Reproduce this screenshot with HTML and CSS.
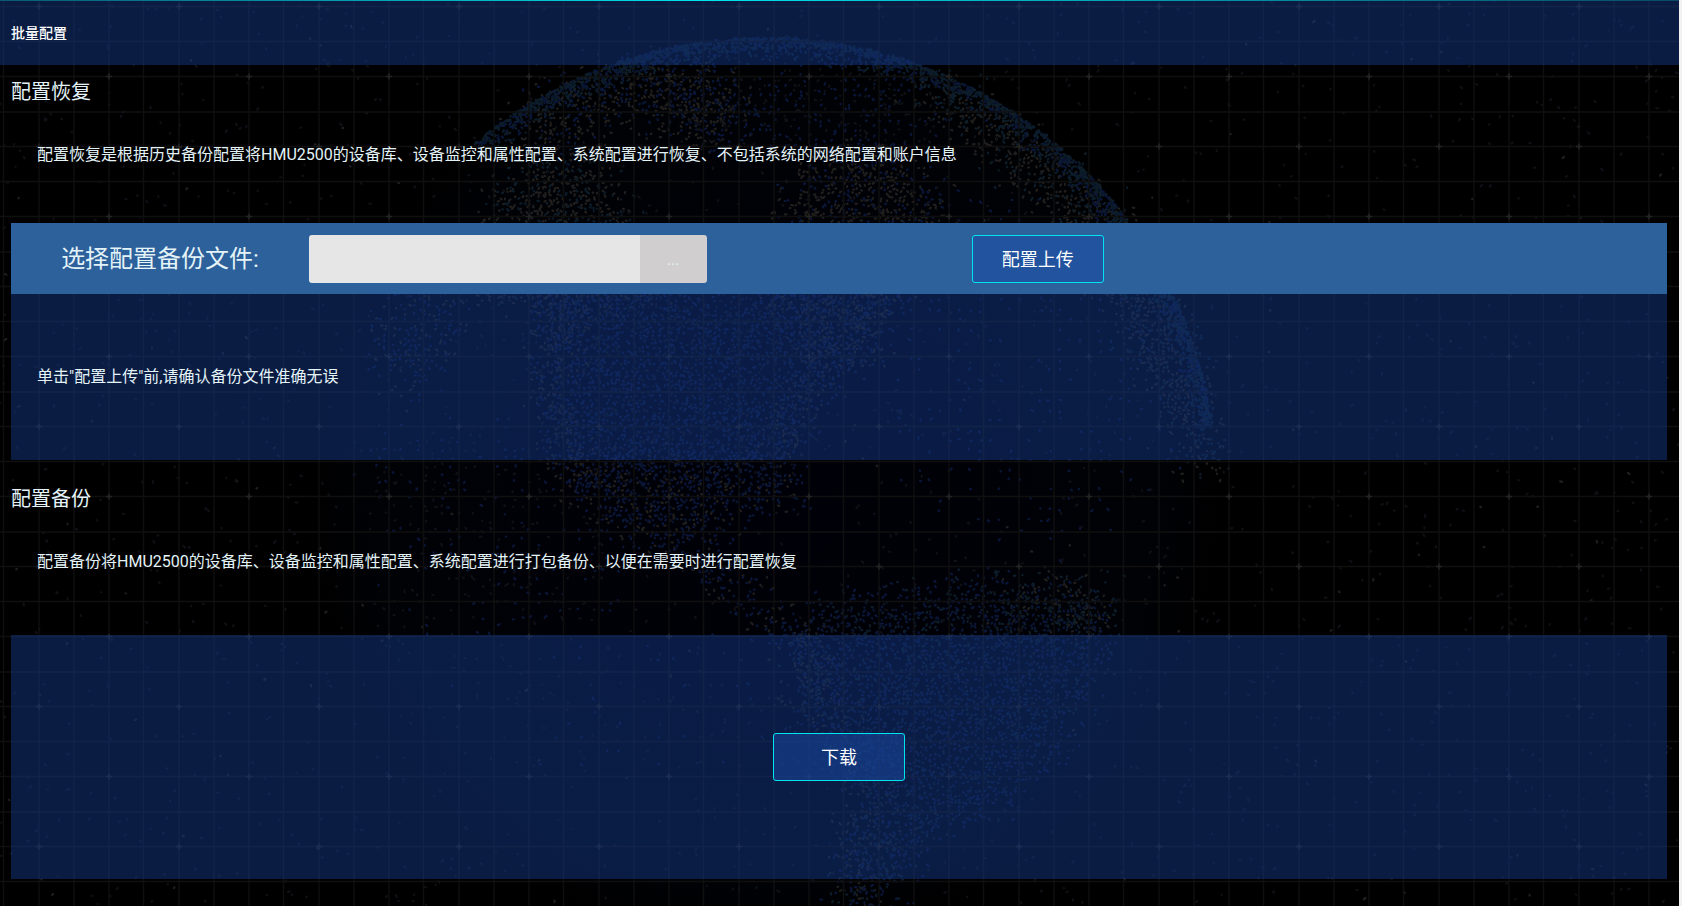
FILE: index.html
```html
<!DOCTYPE html>
<html lang="zh-CN">
<head>
<meta charset="utf-8">
<title>批量配置</title>
<link rel="stylesheet" href="styles.css">
</head>
<body>
<div class="page">
  <svg class="backdrop" viewBox="0 0 1679 906" preserveAspectRatio="xMinYMin slice" aria-hidden="true">
    <defs>
      <pattern id="grid" width="140" height="140" patternUnits="userSpaceOnUse">
        <path d="M3.500 0V140M39 0V140M74 0V140M109 0V140M0 6.500H140M0 41.500H140M0 76.500H140M0 112H140" stroke="#0f0f0f" stroke-width="1.300"/>
        <path d="M36 6.500H42M39 3.500V9.500M106 76.500H112M109 73.500V79.500" stroke="#242424" stroke-width="1.500"/>
      </pattern>
      <radialGradient id="glow">
        <stop offset="0" stop-color="#000008"/>
        <stop offset=".85" stop-color="#010206"/>
        <stop offset="1" stop-color="#000"/>
      </radialGradient>
    </defs>
    <circle cx="765" cy="490" r="458" fill="url(#glow)"/>
    <g id="globe" fill="none" stroke-linecap="round"></g>
    <rect width="1679" height="906" fill="url(#grid)"/>
  </svg>

  <header class="topbar"><h1 class="topbar-title">批量配置</h1></header>

  <main class="content">
    <section class="restore">
      <h2 class="title">配置恢复</h2>
      <p class="desc">配置恢复是根据历史备份配置将HMU2500的设备库、设备监控和属性配置、系统配置进行恢复、不包括系统的网络配置和账户信息</p>
      <form class="panel" onsubmit="return false">
        <div class="upload-bar">
          <label class="upload-label" for="file">选择配置备份文件:</label>
          <div class="picker">
            <input class="picker-input" id="file" type="text">
            <button class="picker-browse" type="button">...</button>
          </div>
          <button class="btn" type="submit">配置上传</button>
        </div>
        <p class="note">单击"配置上传"前,请确认备份文件准确无误</p>
      </form>
    </section>

    <section class="backup">
      <h2 class="title">配置备份</h2>
      <p class="desc">配置备份将HMU2500的设备库、设备监控和属性配置、系统配置进行打包备份、以便在需要时进行配置恢复</p>
      <div class="panel download">
        <button class="btn" type="button">下载</button>
      </div>
    </section>
  </main>
</div>
<script src="globe.js"></script>
</body>
</html>
```
FILE: styles.css
```css
* {
  box-sizing: border-box;
}

body {
  margin: 0;
  background: #f2f2f2;
  color: #e4f3f8;
  font-family: Roboto, "Noto Sans CJK SC", sans-serif;
  font-size: 16px;
}

h1, h2, p {
  margin: 0;
  font-weight: 400;
}

.page {
  position: relative;
  min-height: 100vh;
  margin-right: 3px;
  padding-bottom: 24px;
  background: #000;
  overflow: hidden;
}

/* starfield, globe and grid behind all content */
.backdrop {
  position: absolute;
  inset: 0;
  width: 100%;
  height: 100%;
}

.topbar {
  position: relative;
  padding: 2px 11px 0;
  background: rgba(20, 56, 132, 0.5);
}

.topbar::before {
  content: "";
  position: absolute;
  inset: 0 0 auto;
  height: 1px;
  background: linear-gradient(90deg, #0a5a74, #00e4ee 42%, #0a4a66);
}

.topbar-title {
  color: #fff;
  font-size: 14px;
  font-weight: 500;
  line-height: 63px;
}

.content {
  position: relative;
  padding: 0 12px 0 11px;
}

.title {
  font-size: 20px;
  line-height: 54px;
}

.desc {
  padding: 0 26px;
  line-height: 72px;
}

.restore .desc {
  margin-bottom: 32px;
}

.backup {
  padding-top: 12px;
}

.backup .desc {
  margin-bottom: 37px;
}

.panel {
  background: rgba(20, 56, 132, 0.5);
}

.upload-bar {
  display: grid;
  grid-template-columns: 18% 24% 40%;
  align-items: center;
  justify-items: center;
  padding: 12px 0 11px;
  background: #2c619b;
}

.upload-label {
  font-size: 24px;
  line-height: 48px;
}

.picker {
  display: flex;
  width: 100%;
  height: 48px;
  border-radius: 3px;
  overflow: hidden;
}

.picker-input {
  flex: 1;
  min-width: 0;
  padding: 0 12px;
  border: 0;
  background: #e6e6e6;
  color: #333;
  font: inherit;
}

.picker-browse {
  width: 67px;
  padding: 0;
  border: 0;
  background: #d0cece;
  color: #e4f3f8;
  font: inherit;
}

.btn {
  width: 132px;
  height: 48px;
  padding: 0 0 2px;
  border: 1px solid #00e4f0;
  border-radius: 3px;
  background: rgba(26, 72, 160, 0.55);
  color: #fff;
  font: inherit;
  font-size: 18px;
}

.note {
  padding: 0 26px;
  line-height: 166px;
}

.download {
  display: flex;
  justify-content: center;
  padding: 98px 0;
}
```
FILE: globe.js
```js
// Scatters the dots that form the continents, the rim and the stars.
(function () {
  var seed = 7;
  function rnd() {
    seed = (seed * 16807) % 2147483647;
    return seed / 2147483647;
  }
  var warm = "#201f1e", blue = "#0a1638", teal = "#0c1c28", dim = "#0e1016";
  var paths = {};
  function dot(x, y, color) {
    var len = 2 + rnd() * 2;
    (paths[color] = paths[color] || []).push(
      "M" + x.toFixed(1) + " " + y.toFixed(1) + "l" + ((rnd() - 0.5) * len).toFixed(1) + " " + ((rnd() - 0.5) * len).toFixed(1));
  }
  function inside(p, x, y) {
    var hit = false;
    for (var i = 0, j = p.length - 1; i < p.length; j = i++) {
      if (p[i][1] > y !== p[j][1] > y &&
          x < (p[j][0] - p[i][0]) * (y - p[i][1]) / (p[j][1] - p[i][1]) + p[i][0]) hit = !hit;
    }
    return hit;
  }
  function fill(points, step, density, colors) {
    var xs = points.map(function (p) { return p[0]; });
    var ys = points.map(function (p) { return p[1]; });
    var x0 = Math.min.apply(0, xs) - 20, x1 = Math.max.apply(0, xs) + 20;
    var y0 = Math.min.apply(0, ys) - 20, y1 = Math.max.apply(0, ys) + 20;
    for (var y = y0; y < y1; y += step) {
      for (var x = x0; x < x1; x += step) {
        if (rnd() > density) continue;
        if (!inside(points, x + (rnd() - 0.5) * 40, y + (rnd() - 0.5) * 40)) continue;
        dot(x + (rnd() - 0.5) * 3, y + (rnd() - 0.5) * 3, colors[Math.floor(rnd() * colors.length)]);
      }
    }
  }

  fill([[510, 112], [560, 85], [640, 62], [720, 66], [750, 100], [720, 150], [650, 120], [600, 118], [550, 160], [520, 140]], 4, 0.7, [warm, warm, blue]);
  fill([[520, 165], [590, 160], [630, 223], [660, 300], [470, 300], [490, 205]], 4, 0.75, [warm, warm, teal]);
  fill([[850, 145], [900, 160], [950, 223], [900, 300], [760, 300], [790, 185]], 4, 0.7, [warm, warm, blue]);
  fill([[640, 70], [900, 70], [960, 140], [850, 150], [700, 150]], 5, 0.4, [blue, dim]);
  fill([[375, 310], [430, 285], [470, 300], [440, 370], [400, 400], [380, 380]], 5, 0.6, [warm, blue, blue]);
  fill([[540, 280], [890, 280], [875, 350], [830, 385], [790, 450], [790, 470], [565, 470], [545, 400]], 4, 0.65, [blue, blue, blue, dim]);
  fill([[780, 290], [890, 285], [880, 350], [820, 380], [790, 460], [770, 440], [800, 370]], 4, 0.5, [warm]);
  fill([[540, 290], [600, 290], [570, 370], [590, 470], [555, 470], [540, 390]], 4, 0.5, [warm]);
  fill([[550, 455], [780, 455], [810, 500], [690, 530], [770, 600], [820, 640], [780, 650], [720, 580], [610, 530]], 4, 0.65, [warm, blue, blue]);
  fill([[800, 610], [860, 600], [1000, 575], [1020, 600], [1110, 590], [1105, 660], [1065, 740], [1000, 810], [930, 830], [890, 906], [830, 906], [865, 790], [795, 700]], 4, 0.6, [blue, blue, teal]);
  fill([[1000, 580], [1115, 585], [1100, 640], [1000, 620]], 4, 0.5, [teal, warm]);
  fill([[790, 630], [830, 640], [850, 730], [890, 800], [880, 906], [835, 906], [855, 780], [790, 690]], 4, 0.4, [warm]);
  fill([[350, 430], [560, 430], [640, 620], [400, 620]], 8, 0.4, [blue, dim]);
  fill([[380, 640], [760, 640], [850, 790], [500, 750]], 13, 0.35, [blue, dim]);
  fill([[900, 200], [1110, 200], [1200, 420], [1080, 560], [880, 480]], 10, 0.3, [blue]);

  // thin outer edge of the globe
  for (var i = 0; i < 2600; i++) {
    var a = (-130 + rnd() * 122) * Math.PI / 180, r = 452 - rnd() * rnd() * 26;
    dot(765 + r * Math.cos(a), 490 + r * Math.sin(a), rnd() < 0.5 ? teal : blue);
  }
  // wide band of land along the right-hand edge
  fill([[900, 75], [960, 90], [1040, 140], [1125, 215], [1175, 300], [1210, 400], [1216, 470], [1200, 478], [1165, 410], [1125, 330], [1090, 260], [1030, 190], [950, 125]], 4, 0.75, [warm, warm, teal]);

  for (i = 0; i < 1900; i++) dot(rnd() * 1679, rnd() * 906, dim);
  for (i = 0; i < 160; i++) dot(rnd() * 1679, rnd() * 906, warm);

  document.getElementById("globe").innerHTML = Object.keys(paths).map(function (c) {
    return '<path stroke="' + c + '" stroke-width="2.2" d="' + paths[c].join("") + '"/>';
  }).join("");
})();
```
